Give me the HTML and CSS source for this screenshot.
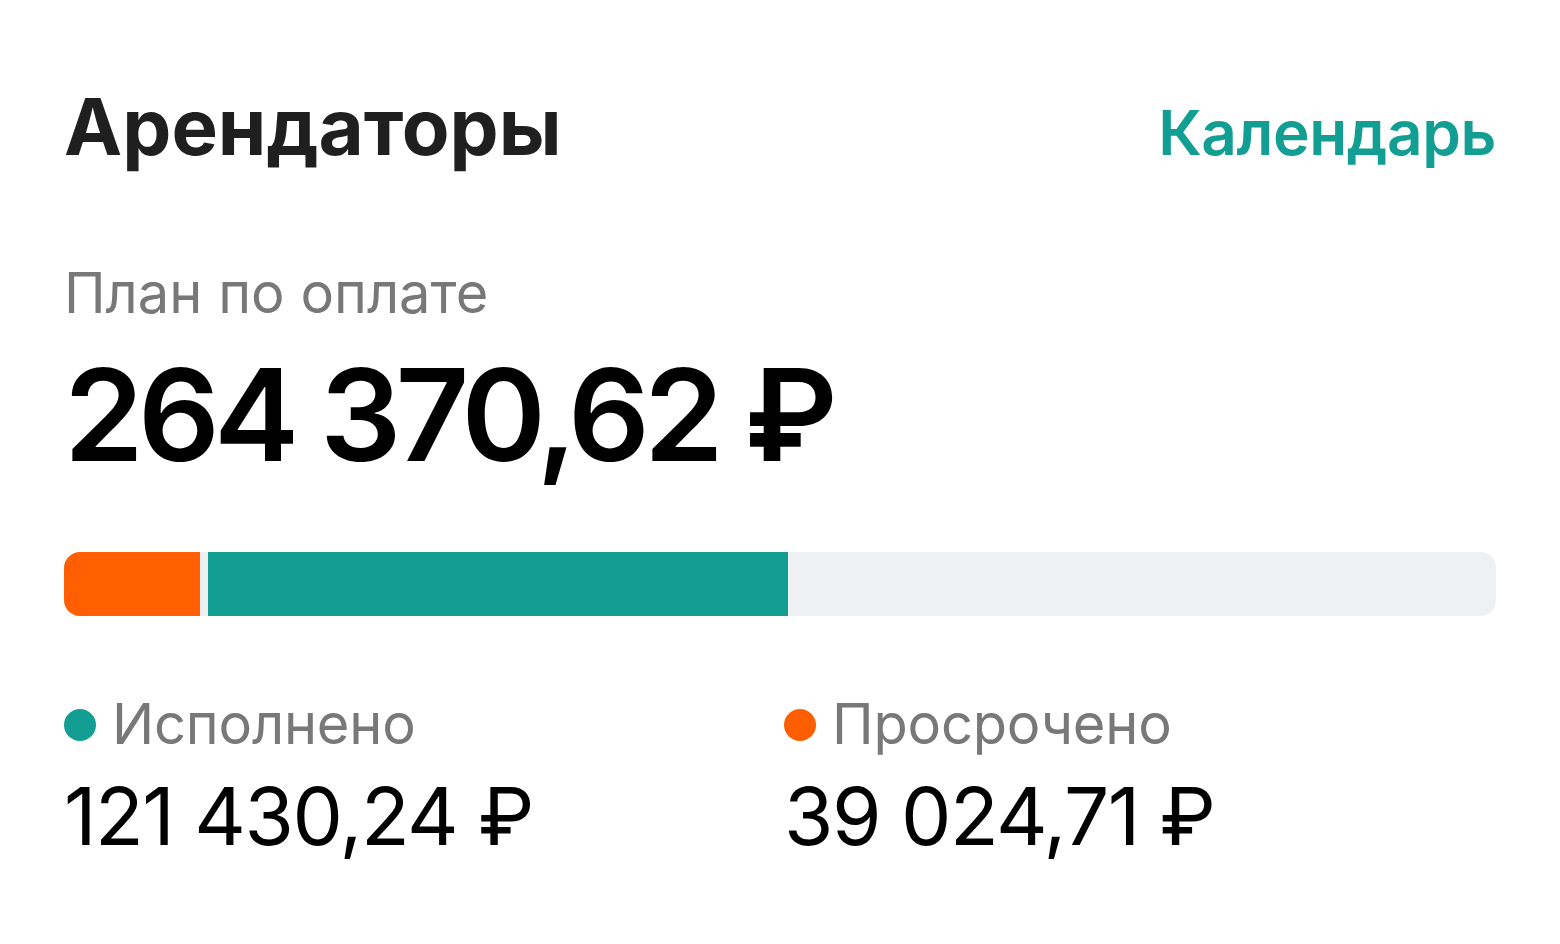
FILE: index.html
```html
<!DOCTYPE html>
<html lang="ru">
<head>
<meta charset="utf-8">
<title>Арендаторы</title>
<link rel="stylesheet" href="styles.css">
</head>
<body>
<main class="card">
  <header class="card-head">
    <h1 class="title">Арендаторы</h1>
    <a class="link" href="#">Календарь</a>
  </header>
  <section class="plan">
    <div class="plan-label">План по оплате</div>
    <div class="plan-value">264 370,62 ₽</div>
  </section>
  <div class="bar">
    <div class="seg seg-overdue" style="width: 136px"></div>
    <div class="seg seg-done" style="width: 580px"></div>
  </div>
  <div class="legend">
    <div class="legend-item">
      <div class="legend-label"><span class="dot dot-done"></span>Исполнено</div>
      <div class="legend-value">121 430,24 ₽</div>
    </div>
    <div class="legend-item">
      <div class="legend-label"><span class="dot dot-overdue"></span>Просрочено</div>
      <div class="legend-value">39 024,71 ₽</div>
    </div>
  </div>
</main>
</body>
</html>
```
FILE: styles.css
```css
* { box-sizing: border-box; }
html, body { margin: 0; background: #fff; }
body {
  font-family: Inter, "Noto Sans", "Liberation Sans", sans-serif;
  color: #000;
}
.card {
  width: 1560px;
  height: 944px;
  padding: 80px 64px 0 64px;
}
.card-head {
  display: flex;
  justify-content: space-between;
  align-items: baseline;
}
.title {
  margin: 0;
  font-size: 78px;
  line-height: 1.2;
  font-weight: 700;
  color: #1f1f1f;
  letter-spacing: 0;
}
.link {
  font-size: 62px;
  line-height: 1.2;
  font-weight: 600;
  color: #129e92;
  text-decoration: none;
  letter-spacing: -0.4px;
}
.plan { margin-top: 86px; }
.plan-label {
  font-size: 56px;
  line-height: 1.2;
  color: #787878;
}
.plan-value {
  margin-top: 11px;
  font-size: 128px;
  line-height: 1.2;
  font-weight: 600;
  letter-spacing: -5.8px;
}
.bar {
  margin-top: 61px;
  height: 64px;
  border-radius: 16px;
  background: #eff0f2;
  display: flex;
  gap: 8px;
  overflow: hidden;
}
.seg { height: 100%; }
.seg-overdue { background: #ff5f00; }
.seg-done { background: #129e92; }
.legend {
  margin-top: 75px;
  display: grid;
  grid-template-columns: 1fr 1fr;
  column-gap: 8px;
}
.legend-label {
  display: flex;
  align-items: center;
  gap: 16px;
  font-size: 56px;
  line-height: 1.2;
  color: #787878;
  letter-spacing: -0.2px;
}
.dot {
  width: 32px;
  height: 32px;
  border-radius: 50%;
  flex: none;
}
.dot-done { background: #129e92; }
.dot-overdue { background: #ff5f00; }
.legend-value {
  margin-top: 9px;
  font-size: 80px;
  line-height: 1.2;
  font-weight: 400;
  letter-spacing: -1.5px;
}
```
